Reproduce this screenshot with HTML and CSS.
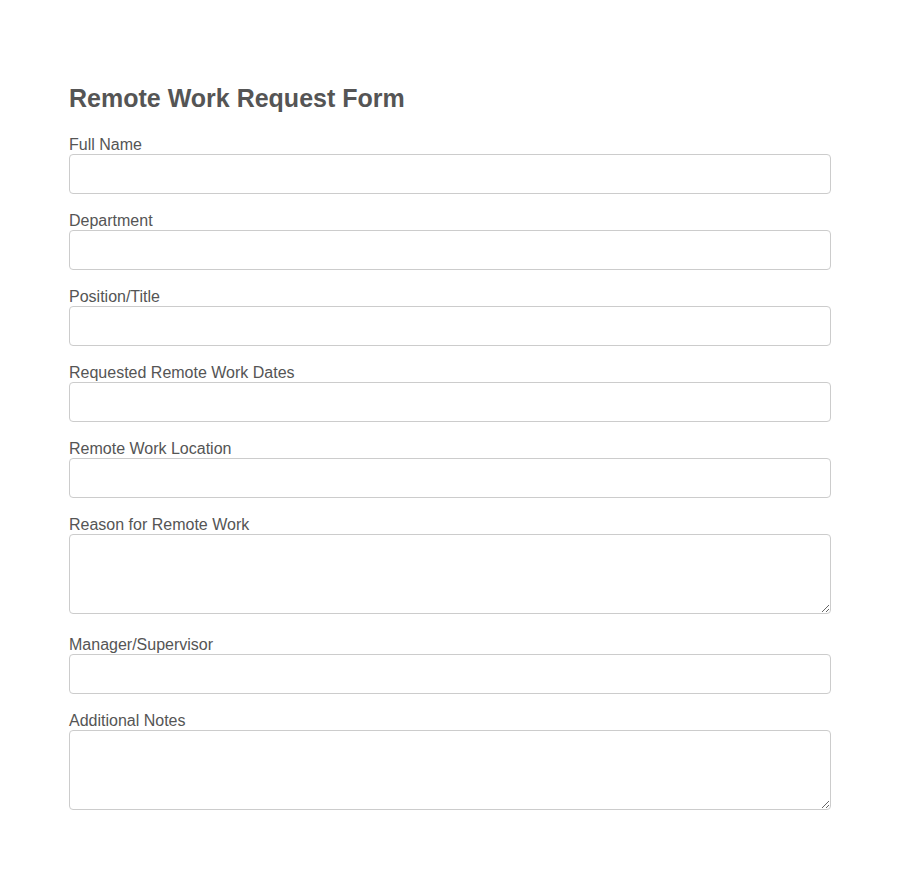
FILE: index.html
```html
<!DOCTYPE html>
<html>
<head>
    <title>Remote Work Request Form</title>
    <link rel="stylesheet" href="styles.css">
</head>
<body>
    <div class="form-container">
        <h2>Remote Work Request Form</h2>

        <form>
            <div class="form-group">
                <label for="fullName">Full Name</label>
                <input type="text" id="fullName" name="fullName">
            </div>
            <div class="form-group">
                <label for="department">Department</label>
                <input type="text" id="department" name="department">
            </div>
            <div class="form-group">
                <label for="position">Position/Title</label>
                <input type="text" id="position" name="position">
            </div>
            <div class="form-group">
                <label for="dates">Requested Remote Work Dates</label>
                <input type="text" id="dates" name="dates">
            </div>
            <div class="form-group">
                <label for="location">Remote Work Location</label>
                <input type="text" id="location" name="location">
            </div>
            <div class="form-group">
                <label for="reason">Reason for Remote Work</label>
                <textarea id="reason" name="reason"></textarea>
            </div>
            <div class="form-group">
                <label for="manager">Manager/Supervisor</label>
                <input type="text" id="manager" name="manager">
            </div>
            <div class="form-group">
                <label for="notes">Additional Notes</label>
                <textarea id="notes" name="notes"></textarea>
            </div>
        </form>
    </div>
</body>
</html>
```

FILE: styles.css
```css
/* Remote work request form */

body {
    margin: 0;
    background-color: #fff;
    font-family: "Liberation Sans", Arial, sans-serif;
    color: #555;
}

.form-container {
    width: 762px;
    margin: 0 auto;
    padding: 84px 0 40px;
}

h2 {
    font-size: 25px;
    line-height: 28px;
    font-weight: bold;
    margin: 0 0 24px;
    color: #555;
}

.form-group {
    margin-bottom: 18px;
}

.form-group label {
    display: block;
    font-size: 16px;
    line-height: 18px;
}

.form-group input,
.form-group textarea {
    display: block;
    width: 100%;
    box-sizing: border-box;
    margin: 0;
    padding: 10px;
    border: 1px solid #ccc;
    border-radius: 4px;
    font-family: inherit;
    font-size: 16px;
    background-color: #fff;
}

.form-group input {
    height: 40px;
}

/* textareas sit a little lower than the single-line fields */
.form-group textarea {
    height: 80px;
    margin-bottom: 22px;
}
```
